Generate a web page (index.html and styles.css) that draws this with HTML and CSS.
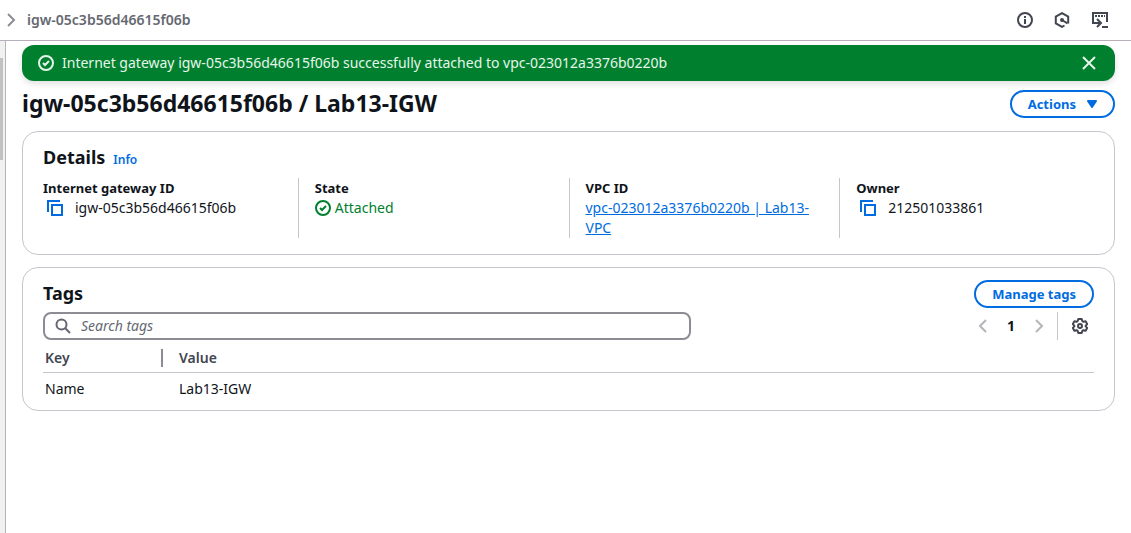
FILE: index.html
```html
<!DOCTYPE html>
<html lang="en">
<head>
<meta charset="utf-8">
<title>igw-05c3b56d46615f06b | Internet gateways</title>
<link rel="stylesheet" href="styles.css">
</head>
<body>
<header class="topbar">
  <nav class="breadcrumb" aria-label="Breadcrumbs">
    <svg class="icon icon-muted" viewBox="0 0 16 16" aria-hidden="true"><path d="M4 2l6 6-6 6"/></svg>
    <span>igw-05c3b56d46615f06b</span>
  </nav>
  <div class="tools">
    <button class="icon-button" aria-label="Info"><svg class="icon" viewBox="0 0 16 16"><circle cx="8" cy="8" r="7"/><path d="M8 12V7M8 6V4"/></svg></button>
    <button class="icon-button" aria-label="Amazon Q"><svg class="icon" viewBox="0 0 16 16"><path d="M10.500 13.500L8 14.900l-6.200-3.400v-7L8 1.100l6.200 3.400v7"/><path d="M8 8l5.500 3.300"/><circle class="solid" cx="8" cy="8" r="2"/></svg></button>
    <button class="icon-button" aria-label="CloudShell"><svg class="icon icon-wide" viewBox="0 0 18 16"><path d="M2 9V1h14v9M2 8v3h7M6 7l4 4-4 4M11 15h6"/><path d="M4 4h2M7 4h2M10 4h2M13 4h1"/></svg></button>
  </div>
</header>
<div class="shell">
  <aside class="rail" aria-hidden="true"><div class="rail-thumb"></div></aside>
  <main class="content">
    <div class="flash" role="status">
      <svg class="icon" viewBox="0 0 16 16" aria-hidden="true"><circle cx="8" cy="8" r="7"/><path d="M5 8l2 2 4-4"/></svg>
      <span class="flash-text">Internet gateway igw-05c3b56d46615f06b successfully attached to vpc-023012a3376b0220b</span>
      <button class="icon-button flash-close" aria-label="Dismiss"><svg class="icon" viewBox="0 0 16 16"><path d="M2 2l12 12M14 2L2 14"/></svg></button>
    </div>
    <div class="title-row">
      <h1>igw-05c3b56d46615f06b / Lab13-IGW</h1>
      <button class="button">Actions <svg class="caret" viewBox="0 0 10 10" aria-hidden="true"><path d="M1 2h8L5 8z"/></svg></button>
    </div>
    <section class="card details">
      <div class="card-heading"><h2>Details</h2><a class="info" href="#info">Info</a></div>
      <dl class="fields">
        <div class="field"><dt>Internet gateway ID</dt><dd class="copyable"><button class="icon-button copy" aria-label="Copy internet gateway ID"><svg class="icon" viewBox="0 0 16 16"><path d="M13 1H1v11M5 5h10v10H5z"/></svg></button>igw-05c3b56d46615f06b</dd></div>
        <div class="field"><dt>State</dt><dd class="state"><svg class="icon" viewBox="0 0 16 16" aria-hidden="true"><circle cx="8" cy="8" r="7"/><path d="M5 8l2 2 4-4"/></svg>Attached</dd></div>
        <div class="field"><dt>VPC ID</dt><dd><a href="#vpc">vpc-023012a3376b0220b | Lab13-VPC</a></dd></div>
        <div class="field"><dt>Owner</dt><dd class="copyable"><button class="icon-button copy" aria-label="Copy owner"><svg class="icon" viewBox="0 0 16 16"><path d="M13 1H1v11M5 5h10v10H5z"/></svg></button>212501033861</dd></div>
      </dl>
    </section>
    <section class="card tags">
      <div class="tags-head"><h2>Tags</h2><button class="button">Manage tags</button></div>
      <div class="filter-row">
        <label class="search">
          <svg class="icon" viewBox="0 0 16 16" aria-hidden="true"><circle cx="6.500" cy="6.500" r="5"/><path d="M10 10l5 5"/></svg>
          <input type="search" placeholder="Search tags" aria-label="Search tags">
        </label>
        <div class="pager">
          <button class="icon-button page-arrow" aria-label="Previous page"><svg class="icon" viewBox="0 0 16 16"><path d="M11 2L5 8l6 6"/></svg></button>
          <button class="page">1</button>
          <button class="icon-button page-arrow" aria-label="Next page"><svg class="icon" viewBox="0 0 16 16"><path d="M5 2l6 6-6 6"/></svg></button>
          <span class="divider"></span>
          <button class="icon-button" aria-label="Preferences"><svg class="icon icon-round" viewBox="0 0 16 16"><path d="M6.300 1h3.400l.6 2.100 1.200.7 2.100-.5 1.600 2.800L13.700 7.600v.8l1.500 1.500-1.600 2.800-2.100-.5-1.200.7-.6 2.100H6.300l-.6-2.100-1.200-.7-2.100.5L.8 9.900l1.500-1.500v-.8L.8 6.100l1.600-2.800 2.100.5 1.200-.7z"/><circle cx="8" cy="8" r="2"/></svg></button>
        </div>
      </div>
      <table>
        <thead><tr><th class="key" scope="col"><span>Key</span></th><th scope="col">Value</th></tr></thead>
        <tbody><tr><td>Name</td><td>Lab13-IGW</td></tr></tbody>
      </table>
    </section>
  </main>
</div>
</body>
</html>
```
FILE: styles.css
```css
* { box-sizing: border-box; }
body {
  margin: 0;
  min-height: 100vh;
  display: flex;
  flex-direction: column;
  background: #fff;
  color: #0f141a;
  font: 14px/20px "Noto Sans", "Open Sans", sans-serif;
}
h1, h2, dl, dd { margin: 0; }
h1 { padding-bottom: 2px; font-size: 23px; line-height: 26px; font-weight: 700; }
h2 { font-size: 18px; line-height: 26px; font-weight: 700; }
a { color: #006ce0; }
button { font: inherit; cursor: pointer; }
.icon {
  display: block;
  flex: none;
  width: 16px;
  height: 16px;
  fill: none;
  stroke: currentColor;
  stroke-width: 2;
}
.icon-wide { width: 18px; }
.icon-round { stroke-linejoin: round; }
.icon .solid { fill: currentColor; stroke: none; }
.icon-button { padding: 0; border: 0; background: none; color: #424650; }
.icon-muted { color: #8c8c94; }

.topbar {
  display: flex;
  align-items: center;
  justify-content: space-between;
  height: 41px;
  padding: 0 22px 0 4px;
  border-bottom: 1px solid #b6aeb8;
}
.breadcrumb { display: flex; align-items: center; gap: 7px; color: #656871; font-weight: 600; }
.tools { display: flex; gap: 22px 21px; }

.shell { flex: 1; display: flex; }
.rail { flex: none; width: 6px; padding-top: 17px; background: #f1f1f1; border-right: 1px solid #b4b4bb; }
.rail-thumb { width: 3px; height: 102px; background: #c1c1c1; }
.content { flex: 1; min-width: 0; padding: 4px 16px; }

.flash {
  display: flex;
  align-items: center;
  gap: 8px;
  min-height: 36px;
  padding: 8px 18px 8px 16px;
  border-radius: 12px;
  background: #00802f;
  color: #e6f5e9;
  box-shadow: 0 3px 6px rgba(0, 7, 22, 0.12);
}
.flash-text { flex: 1; }
.flash-close { color: #e6f5e9; }
.title-row { display: flex; align-items: center; justify-content: space-between; margin: 9px 0 13px; }
.button {
  display: flex;
  align-items: center;
  gap: 11px;
  height: 28px;
  padding: 0 16px;
  border: 2px solid #006ce0;
  border-radius: 14px;
  background: #fff;
  color: #006ce0;
  font-size: 13px;
  font-weight: 700;
}
.caret { width: 10px; height: 10px; fill: currentColor; stroke: currentColor; stroke-width: 2; stroke-linejoin: round; }

.card { border: 1px solid #c6c6cd; border-radius: 16px; }
.details { padding: 12px 20px 16px; }
.card-heading { display: flex; align-items: baseline; gap: 8px; }
.info { font-size: 12px; font-weight: 600; text-decoration: none; }
.fields { display: grid; grid-template-columns: repeat(4, 1fr); margin: 8px -16px 0; }
.field { min-height: 60px; padding: 0 16px; }
.field + .field { border-left: 1px solid #c6c6cd; }
dt { font-size: 13px; font-weight: 700; }
.copyable, .state { display: flex; align-items: center; }
.copyable { gap: 12px; padding-left: 4px; }
.copy { color: #006ce0; }
.state { gap: 4px; color: #00802f; }

.tags { margin-top: 12px; padding: 12px 20px 5px; }
.tags-head { display: flex; justify-content: space-between; }
.filter-row { display: flex; align-items: center; justify-content: space-between; margin-top: 4px; }
.search {
  display: flex;
  align-items: center;
  gap: 10px;
  flex: 0 1 648px;
  height: 28px;
  padding: 0 10px;
  border: 2px solid #8c8c94;
  border-radius: 8px;
  color: #656871;
}
.search input { flex: 1; min-width: 0; padding: 0; border: 0; outline: 0; background: none; font: inherit; }
.search input::placeholder { color: #656871; font-style: italic; }
.pager { display: flex; align-items: center; padding-right: 6px; }
.page-arrow { color: #b4b4bb; }
.page { width: 40px; padding: 0; border: 0; background: none; color: #0f141a; font-weight: 700; }
.divider { width: 1px; height: 28px; margin: 0 14px 0 10px; background: #c6c6cd; }

table { width: 100%; border-collapse: collapse; table-layout: fixed; }
th, td { padding: 6px 16px; text-align: left; }
th { padding: 8px 16px 4px; border-bottom: 1px solid #c6c6cd; color: #424650; font-weight: 600; }
.key { width: 120px; padding-right: 0; }
.key span { display: block; border-right: 2px solid #8c8c94; line-height: 18px; }
th:first-child, td:first-child { padding-left: 2px; }
```
